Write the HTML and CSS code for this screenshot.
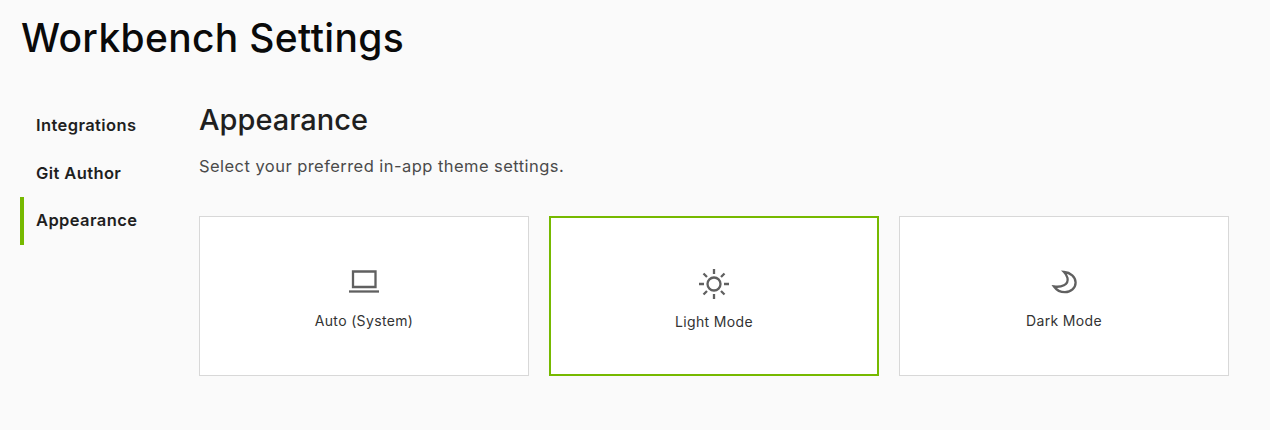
FILE: index.html
```html
<!DOCTYPE html>
<html lang="en">
<head>
    <meta charset="UTF-8">
    <title>Workbench Settings</title>
    <link rel="stylesheet" href="styles.css">
</head>
<body>
    <h1 class="page-title">Workbench Settings</h1>
    <div class="settings">
        <nav class="side-nav">
            <a class="nav-item">Integrations</a>
            <a class="nav-item">Git Author</a>
            <a class="nav-item active">Appearance</a>
        </nav>
        <main class="content">
            <h2 class="section-title">Appearance</h2>
            <p class="section-text">Select your preferred in-app theme settings.</p>
            <div class="themes">
                <div class="theme-card">
                    <svg class="icon" viewBox="0 0 32 32" fill="none" stroke="#606060" stroke-width="2.300">
                        <path d="M5 4.500h22.500v15.500h-22.500z"/>
                        <path d="M1 24.500h30"/>
                    </svg>
                    <span class="theme-label">Auto (System)</span>
                </div>
                <div class="theme-card selected">
                    <svg class="icon" viewBox="0 0 32 32" fill="none" stroke="#606060" stroke-width="2.300">
                        <circle cx="16" cy="16" r="6.500"/>
                        <path d="M16 1v5M16 26v5M1 16h5M26 16h5M5.500 5.500l3.500 3.500M23 23l3.500 3.500M5.500 26.500l3.500-3.500M23 9l3.500-3.500"/>
                    </svg>
                    <span class="theme-label">Light Mode</span>
                </div>
                <div class="theme-card">
                    <svg class="icon" viewBox="0 0 32 32" fill="none" stroke="#606060" stroke-width="2.300">
                        <path d="M16 5c6.500.5 11.600 5 11.600 10.500 0 5.500-4.600 9.700-10.600 9.700-4.500 0-8.500-2.200-11-5.700 7 1 15-1.500 13.500-8.500-.5-2-1.500-4-3.500-6z"/>
                    </svg>
                    <span class="theme-label">Dark Mode</span>
                </div>
            </div>
        </main>
    </div>
</body>
</html>
```

FILE: styles.css
```css
body {
    font-family: Inter, "Noto Sans", sans-serif;
    background: #fafafa;
    margin: 0;
    padding: 14px 20px 0;
    color: #1f1f1f;
}

.page-title {
    margin: 0 0 28px 1px;
    font-size: 39px;
    line-height: 48px;
    font-weight: 500;
    letter-spacing: 0.33px;
    color: #0a0a0a;
}

.settings {
    display: flex;
}

.side-nav {
    width: 179px;
    flex-shrink: 0;
    display: flex;
    flex-direction: column;
    padding-top: 11px;
}

.nav-item {
    height: 48px;
    line-height: 49px;
    padding-left: 12px;
    border-left: 4px solid transparent;
    font-size: 16.500px;
    font-weight: 600;
    letter-spacing: 0.400px;
    box-sizing: border-box;
}

.nav-item.active {
    line-height: 47px;
    border-left-color: #76b900;
}

.content {
    width: 1030px;
}

.section-title {
    margin: 0;
    font-size: 29px;
    line-height: 40px;
    font-weight: 500;
    padding-top: 10px;
}

.section-text {
    margin: 14px 0 0;
    font-size: 16.500px;
    line-height: 24px;
    letter-spacing: 0.450px;
    color: #4a4a4a;
}

.themes {
    display: flex;
    gap: 20px;
    margin-top: 38px;
}

.theme-card {
    width: 330px;
    height: 160px;
    box-sizing: border-box;
    padding-top: 6px;
    background: #fff;
    border: 1px solid #d8d8d8;
    display: flex;
    flex-direction: column;
    align-items: center;
    justify-content: center;
    gap: 12px;
}

.theme-card.selected {
    padding-top: 7px;
    border: 2px solid #76b900;
}

.icon {
    width: 32px;
    height: 32px;
}

.theme-label {
    font-size: 14px;
    line-height: 20px;
    letter-spacing: 0.350px;
    color: #333;
}
```
